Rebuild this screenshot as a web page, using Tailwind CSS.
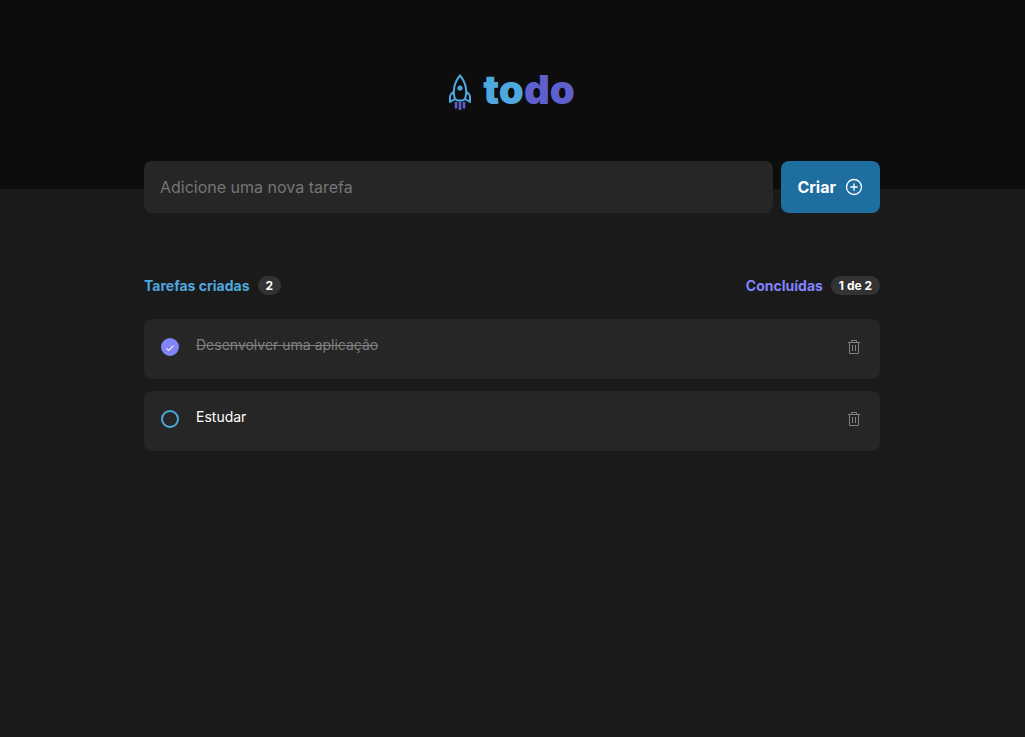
<!DOCTYPE html>
<html lang="pt-BR">

<head>
    <meta charset="UTF-8">
    <meta name="viewport" content="width=device-width, initial-scale=1.0">
    <title>Todo</title>
    <script src="https://cdn.jsdelivr.net/npm/@tailwindcss/browser@4"></script>
</head>

<body class="min-h-screen bg-[#1a1a1a] font-['Inter',sans-serif] text-white">
    <header class="flex h-[189px] justify-center bg-[#0d0d0d] pt-[66px] pr-px">
        <h1 class="flex h-12 items-center gap-3">
            <svg class="mt-1 h-9 w-[22px]" viewBox="0 0 22 36" fill="none" aria-hidden="true">
                <path d="M6 25C3.600 18 4.800 8.500 11 1.500C17.200 8.500 18.400 18 16 25" stroke="#4ea8de" stroke-width="2" />
                <path d="M4.700 17.500L1.800 20.500Q1 21.500 1 23V28L5 25.500H7L8.500 26.500H13.500L15 25.500H17L21 28V23Q21 21.500 20.200 20.500L17.300 17.500" stroke="#4ea8de" stroke-width="2" stroke-linejoin="round" />
                <circle cx="11" cy="14" r="2.600" fill="#4ea8de" />
                <path d="M7 28V34.500M11 28V36M15 28V34.500" stroke="#5e60ce" stroke-width="2.600" />
            </svg>
            <span class="text-[40px] leading-12 font-black text-[#4ea8de]">to<span class="text-[#5e60ce]">do</span></span>
        </h1>
    </header>

    <div class="pr-px">
        <main class="mx-auto -mt-7 w-full max-w-[768px] px-4">
            <form id="task_form" class="flex gap-2">
                <input id="input_task" type="text" placeholder="Adicione uma nova tarefa" aria-label="Nova tarefa"
                    class="h-[52px] min-w-0 flex-1 rounded-lg bg-[#262626] px-4 text-base placeholder:text-[#757575] outline-none">
                <button type="submit"
                    class="flex h-[52px] cursor-pointer items-center gap-2 rounded-lg bg-[#1e6f9f] px-4 font-bold hover:bg-[#4ea8de]">
                    Criar
                    <svg class="size-5" viewBox="0 0 20 20" fill="none" stroke="currentColor" stroke-width="1.300" stroke-linecap="round" aria-hidden="true">
                        <circle cx="10" cy="10" r="7.500" />
                        <path d="M6.800 10H13.200M10 6.800V13.200" />
                    </svg>
                </button>
            </form>

            <div class="mt-[63px] flex justify-between text-sm leading-[19px] font-bold">
                <p class="flex items-center gap-2 text-[#4ea8de]">Tarefas criadas
                    <span id="created" class="rounded-full bg-[#333333] px-2 text-xs leading-[19px] text-white">2</span>
                </p>
                <p class="flex items-center gap-2 text-[#8284fa]">Concluídas
                    <span id="done" class="rounded-full bg-[#333333] px-2 text-xs leading-[19px] text-white">1 de 2</span>
                </p>
            </div>

            <ul id="task_list" class="mt-6 flex flex-col gap-3">
                <li class="flex min-h-[60px] items-start gap-4 rounded-lg bg-[#262626] px-4 pt-4 pb-4">
                    <label class="flex min-w-0 flex-1 cursor-pointer gap-4">
                        <input type="checkbox" checked class="peer sr-only">
                        <span class="mx-px mt-[3px] flex size-[18px] shrink-0 items-center justify-center rounded-full border-2 border-[#4ea8de] text-transparent peer-checked:border-[#8284fa] peer-checked:bg-[#8284fa] peer-checked:text-[#f2f2f2]">
                            <svg class="mt-px size-2 shrink-0" viewBox="0 0 8 8" fill="none" stroke="currentColor" stroke-width="1.200" aria-hidden="true">
                                <path d="M0.500 4.300L2.700 6.500L7.500 1.700" />
                            </svg>
                        </span>
                        <span class="text-sm peer-checked:text-[#808080] peer-checked:line-through">Desenvolver uma aplicação</span>
                    </label>
                    <button type="button" aria-label="Remover tarefa" class="delete_button mt-[5px] mr-1 cursor-pointer text-[#808080] hover:text-red-400">
                        <svg class="h-[14px] w-3" viewBox="0 0 12 14" fill="none" stroke="currentColor" aria-hidden="true">
                            <path d="M0 2.500H12M1.500 2.500V13.500H10.500V2.500M3.500 2.500V0.500H8.500V2.500M4.500 5V11M7.500 5V11" />
                        </svg>
                    </button>
                </li>
                <li class="flex min-h-[60px] items-start gap-4 rounded-lg bg-[#262626] px-4 pt-4 pb-4">
                    <label class="flex min-w-0 flex-1 cursor-pointer gap-4">
                        <input type="checkbox" class="peer sr-only">
                        <span class="mx-px mt-[3px] flex size-[18px] shrink-0 items-center justify-center rounded-full border-2 border-[#4ea8de] text-transparent peer-checked:border-[#8284fa] peer-checked:bg-[#8284fa] peer-checked:text-[#f2f2f2]">
                            <svg class="mt-px size-2 shrink-0" viewBox="0 0 8 8" fill="none" stroke="currentColor" stroke-width="1.200" aria-hidden="true">
                                <path d="M0.500 4.300L2.700 6.500L7.500 1.700" />
                            </svg>
                        </span>
                        <span class="text-sm peer-checked:text-[#808080] peer-checked:line-through">Estudar</span>
                    </label>
                    <button type="button" aria-label="Remover tarefa" class="delete_button mt-[5px] mr-1 cursor-pointer text-[#808080] hover:text-red-400">
                        <svg class="h-[14px] w-3" viewBox="0 0 12 14" fill="none" stroke="currentColor" aria-hidden="true">
                            <path d="M0 2.500H12M1.500 2.500V13.500H10.500V2.500M3.500 2.500V0.500H8.500V2.500M4.500 5V11M7.500 5V11" />
                        </svg>
                    </button>
                </li>
            </ul>
        </main>
    </div>

    <script>
        let task_list = document.querySelector("#task_list")
        // copied for every new task
        let template = task_list.lastElementChild.cloneNode(true)

        function updateCount() {
            let total = task_list.children.length
            let done = task_list.querySelectorAll("input:checked").length
            document.querySelector("#created").textContent = total
            document.querySelector("#done").textContent = `${done} de ${total}`
        }

        document.querySelector("#task_form").addEventListener("submit", (event) => {
            event.preventDefault()
            let input = document.querySelector("#input_task")
            if (input.value.trim() == "") {
                return
            }
            let item = template.cloneNode(true)
            item.querySelector("label").lastElementChild.textContent = input.value
            task_list.append(item)
            input.value = ""
            updateCount()
        })

        task_list.addEventListener("change", updateCount)

        task_list.addEventListener("click", (event) => {
            let button = event.target.closest(".delete_button")
            if (button) {
                button.parentElement.remove()
                updateCount()
            }
        })
    </script>
</body>

</html>
